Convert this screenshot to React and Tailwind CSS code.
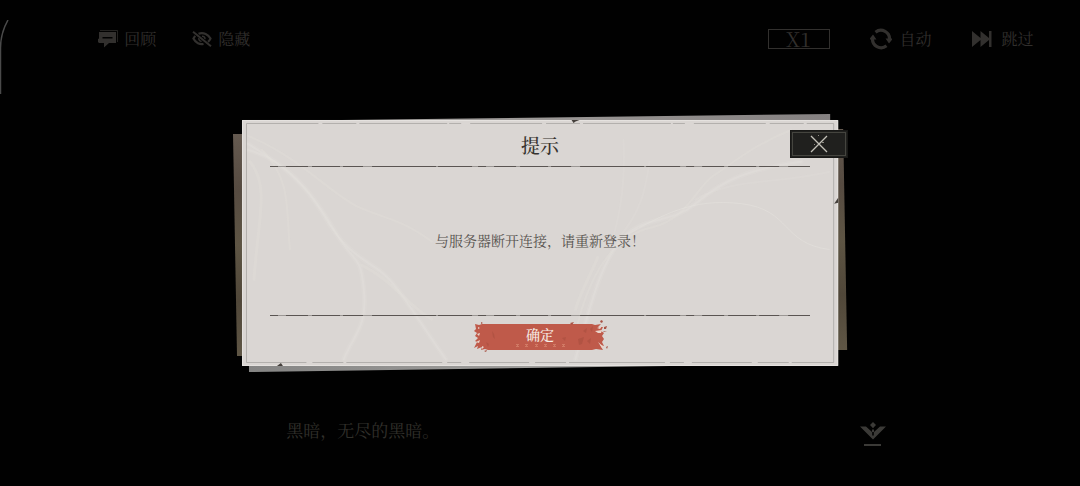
import React from "react";

const serif =
  "font-['Noto_Serif_CJK_SC','Source_Han_Serif_SC','Liberation_Serif','Noto_Sans_CJK_SC',serif]";

function ReviewIcon() {
  return (
    <svg width="20" height="18" viewBox="0 0 20 18" aria-hidden="true">
      <path d="M2 .5H19.500V12" fill="none" stroke="currentColor" strokeWidth="1" opacity=".7" />
      <path
        fillRule="evenodd"
        fill="currentColor"
        d="M1 2H18V13H11L6 17.500V13H1L0 12V9L1 8.500ZM4.500 7V8.500H14.500V7Z"
      />
    </svg>
  );
}

function HiddenIcon() {
  return (
    <svg width="20" height="16" viewBox="0 0 20 16" fill="none" stroke="currentColor" aria-hidden="true">
      <path d="M1 .8 19 15.200" strokeWidth="2" />
      <path d="M6.500 2.800C11.500 .8 16.500 3.600 18.500 7.600C17.900 8.900 17 10 16 10.800" strokeWidth="2.200" />
      <path d="M3.400 5C2.500 5.800 1.800 6.600 1.400 7.600C3.600 12 8 13.800 11.500 12.900" strokeWidth="2.200" />
      <path d="M10 5.200C12 5.200 13.200 6.600 13 8.200M6.800 7.200C6.600 9 8 10.300 9.600 10.200" strokeWidth="1.500" />
    </svg>
  );
}

function AutoIcon() {
  return (
    <svg width="22" height="22" viewBox="0 0 22 22" aria-hidden="true">
      <g fill="none" stroke="currentColor" strokeWidth="3.200">
        <path d="M5.500 4.200A8.600 8.600 0 0 1 19.400 12" />
        <path d="M16.500 17.800A8.600 8.600 0 0 1 2.600 10" />
      </g>
      <path fill="currentColor" d="M15.500 10.500H23L19 15.500ZM-1 11.500H6.500L3 6.500Z" />
    </svg>
  );
}

function SkipIcon() {
  return (
    <svg width="20" height="16" viewBox="0 0 20 16" fill="currentColor" aria-hidden="true">
      <path d="M0 0 8.500 7V0L17 7V0H19.500V16H17V9L8.500 16V9L0 16Z" />
    </svg>
  );
}

function NextIcon() {
  return (
    <svg width="26" height="25" viewBox="0 0 26 25" fill="currentColor" aria-hidden="true">
      <path d="M13 0 16 3 13 6.200 10 3Z" />
      <path d="M0 4.500H6L12 10V7.500H14V10L20 4.500H26L13 17.500ZM12.200 10V13.500H13.800V10Z" fillRule="evenodd" />
      <path d="M4 22H21V24H4Z" />
    </svg>
  );
}

function ToolButton({ icon, children, gap }) {
  return (
    <button type="button" className={`flex items-center ${gap} text-[#32302e]`}>
      {icon}
      <span className="text-base leading-5 text-[#312f2d]">{children}</span>
    </button>
  );
}

function Paper() {
  return (
    <svg
      className="absolute inset-0 h-full w-full overflow-visible"
      viewBox="0 0 597 247"
      preserveAspectRatio="none"
      aria-hidden="true"
    >
      <defs>
        <linearGradient id="wood" x1="0" y1="0" x2="0" y2="1">
          <stop offset="0" stopColor="#655a50" />
          <stop offset=".25" stopColor="#564b41" />
          <stop offset=".5" stopColor="#5e5544" />
          <stop offset=".75" stopColor="#504739" />
          <stop offset="1" stopColor="#5f5645" />
        </linearGradient>
        <linearGradient id="sheetTop" x1="0" x2="1">
          <stop offset="0" stopColor="#aaa7a4" />
          <stop offset="1" stopColor="#858181" />
        </linearGradient>
        <linearGradient id="sheetBottom" x1="0" x2="1">
          <stop offset="0" stopColor="#858584" />
          <stop offset="1" stopColor="#b1afac" />
        </linearGradient>
      </defs>
      <path d="M-9 14H12V237H-5Z" fill="url(#wood)" />
      <path d="M585 9H602L606 231H585Z" fill="url(#wood)" />
      <path d="M100 0 589 -6V8H100Z" fill="url(#sheetTop)" />
      <path d="M7 240V253L500 246V240Z" fill="url(#sheetBottom)" />
      <path d="M0 0H597V247H0Z" fill="#dad6d3" />
      <path d="M.5.5H596.500V246.500H.5Z" fill="none" stroke="#e5e2df" strokeWidth="1" />

      <g fill="none" stroke="#e3e0db" strokeLinecap="round">
        <g strokeWidth="5" opacity=".25">
          <path d="M6 24C40 45 62 62 82 96S116 136 136 150S170 192 204 240" />
          <path d="M334 240C350 180 362 136 384 116S430 104 454 84S500 50 560 42" />
          <path d="M6 30C44 40 70 72 92 110S118 132 122 170S112 215 102 240" />
        </g>
        <path d="M6 24C40 45 62 62 82 96S116 136 136 150S170 192 204 240" strokeWidth="2" opacity=".45" />
        <path d="M6 30C44 40 70 72 92 110S118 132 122 170S112 215 102 240" strokeWidth="2" opacity=".4" />
        <path d="M6 16C60 38 90 76 118 88S160 100 190 122" strokeWidth="2" opacity=".35" />
        <path d="M8 42C28 66 16 100 12 160" strokeWidth="3" opacity=".35" />
        <path d="M20 30C50 60 44 90 48 130" strokeWidth="2" opacity=".3" />
        <path d="M334 240C350 180 362 136 384 116S430 104 454 84S500 50 560 42" strokeWidth="2" opacity=".45" />
        <path d="M336 205C350 150 374 116 410 108S456 66 472 56S510 26 550 10" strokeWidth="2" opacity=".35" />
        <path d="M384 116C420 96 450 78 500 84S540 124 588 130" strokeWidth="1" opacity=".7" />
        <path d="M454 80C490 58 540 64 588 52M376 120C400 92 404 70 408 42M370 124C380 90 384 60 382 20" strokeWidth="2" opacity=".25" />
        <path d="M120 146C150 160 170 190 190 200M334 190C340 170 352 150 356 138" strokeWidth="3" opacity=".35" />
      </g>

      <g fill="none" stroke="#a5a2a0" strokeWidth="1">
        <path d="M4.500 3.500H592.500" strokeDasharray="72 4 34 3 88 2 12 9" opacity=".75" />
        <path d="M4.500 243.500H592.500" strokeDasharray="60 6 31 3 96 5 14 8" opacity=".75" />
        <path d="M4.500 3.500V243.500M592.500 3.500V243.500" opacity=".75" />
      </g>
      <path d="M330 0H338L334 1.500 332 3ZM597 78 593 84 597 83ZM35 247 39 244 41 247Z" fill="#45403c" />
    </svg>
  );
}

function Rule() {
  return (
    <svg className="block h-px w-full" viewBox="0 0 540 1" preserveAspectRatio="none" aria-hidden="true">
      <path d="M0 .5H540" stroke="#9b9794" />
      <path d="M0 .5H540" stroke="#5a5552" strokeDasharray="8 8 22 4 28 3 20 9 64 2 34 6" />
    </svg>
  );
}

function BrushStroke() {
  return (
    <svg
      className="absolute inset-0 h-full w-full overflow-visible"
      viewBox="0 0 132 26"
      preserveAspectRatio="none"
      aria-hidden="true"
    >
      <path
        fill="#bf5a4a"
        d="M1 0 5 1 8 0H118L121 1 127 0 124 3 129 3 127 7 130 9 128 12 130 15 128 18 130 22 126 21 129 26 122 25 118 26H14L11 25 7 26 8 23 3 25 4 22 0 24 3 18 1 17 4 14 1 12 3 9 0 7 2 5Z"
      />
      <path
        fill="#a94e3f"
        opacity=".6"
        d="M18 7 20 10 21 15 19 13ZM104 15 110 13 108 20 105 21ZM88 14 92 13 91 17ZM116 5 119 2 118 8ZM109 7 113 4 112 9ZM12 18 15 20 14 23ZM113 17 117 14 116 20Z"
      />
      <path
        fill="#a85345"
        d="M126 -3 128 -4 129 -2 127 -1ZM130 3 133 2 132 5 130 5ZM132 23 134 22 133 25ZM96 -1 100 -2 98 1ZM7 -2 9 -1 7 0ZM10 27 13 26 12 28ZM129 7 133 8 130 8Z"
      />
      <path
        fill="#ead5cb"
        d="M123 4 128 2 126 5ZM121 7 128 6 127 9 124 9ZM124 18 130 23 128 24ZM3 10 6 9 5 12ZM2 18 6 16 5 19ZM8 22 10 23 8 25ZM4 3 6 4 4 5Z"
      />
      <g fill="#e39a80" opacity=".5">
        {[42, 51, 61, 70, 79, 88].map((x) => (
          <path key={x} d={`M${x} 20h3v1h-1v1h1v1h-3v-1h1v-1h-1z`} />
        ))}
      </g>
    </svg>
  );
}

export default function App() {
  return (
    <div className={`relative flex min-h-screen flex-col justify-between overflow-hidden bg-[#010101] ${serif}`}>
      <svg className="absolute left-0 top-5 text-[#4a4a4a]" width="10" height="74" viewBox="0 0 10 74" aria-hidden="true">
        <path d="M8 0C3 9 .5 17 .5 28V74" fill="none" stroke="currentColor" strokeWidth="1.500" />
      </svg>

      <header className="flex items-center justify-between pt-7 pr-[4.3%] pl-[9.1%]">
        <nav className="flex items-center gap-9" aria-label="剧情">
          <ToolButton gap="gap-1.5" icon={<ReviewIcon />}>回顾</ToolButton>
          <ToolButton gap="gap-1.5" icon={<HiddenIcon />}>隐藏</ToolButton>
        </nav>
        <div className="flex items-center gap-10">
          <button
            type="button"
            className="h-5 w-[62px] border border-[#32302e] text-xl leading-4 text-[#312f2d]"
          >
            X1
          </button>
          <ToolButton gap="gap-2" icon={<AutoIcon />}>自动</ToolButton>
          <ToolButton gap="gap-2.5" icon={<SkipIcon />}>跳过</ToolButton>
        </div>
      </header>

      <footer className="flex items-center justify-between pr-[18%] pb-9 pl-[26.5%]">
        <p className="pb-2 text-[17px] leading-6 text-[#31302b]">黑暗，无尽的黑暗。</p>
        <button type="button" aria-label="继续" className="text-[#3b3a37]">
          <NextIcon />
        </button>
      </footer>

      <div className="absolute inset-0 grid place-items-center">
        <section role="dialog" aria-modal="true" aria-labelledby="notice-title" className="relative w-[55.2%]">
          <Paper />
          <div className="relative flex flex-col px-7">
            <h1 id="notice-title" className="pt-3.5 pb-2.5 text-center text-[19px] leading-[22px] font-medium text-[#37332f]">
              提示
            </h1>
            <Rule />
            <p className="pt-[63px] pb-[65px] text-center text-sm leading-5 text-[#57534f]">
              与服务器断开连接，请重新登录！
            </p>
            <Rule />
            <div className="flex justify-center pt-2 pb-4">
              <button type="button" className="relative h-[26px] w-[132px] text-sm leading-5 font-medium text-[#f6ebe4]">
                <BrushStroke />
                <span className="relative block pb-1.5">确定</span>
              </button>
            </div>
          </div>
          <button
            type="button"
            aria-label="关闭"
            className="absolute top-2.5 -right-2.5 grid h-7 w-[58px] place-items-center border border-[#181816] bg-[#20201e] outline outline-1 -outline-offset-3 outline-[#45453f]"
          >
            <svg width="18" height="18" viewBox="0 0 18 18" aria-hidden="true">
              <path d="M1 1 17 17M17 1 1 17" stroke="#c3c1b9" strokeWidth="1.300" />
              <path d="M8 0H9V1H8ZM12 7H14V8H12ZM4 9H5V10H4Z" fill="#8c8a82" />
            </svg>
          </button>
        </section>
      </div>
    </div>
  );
}
